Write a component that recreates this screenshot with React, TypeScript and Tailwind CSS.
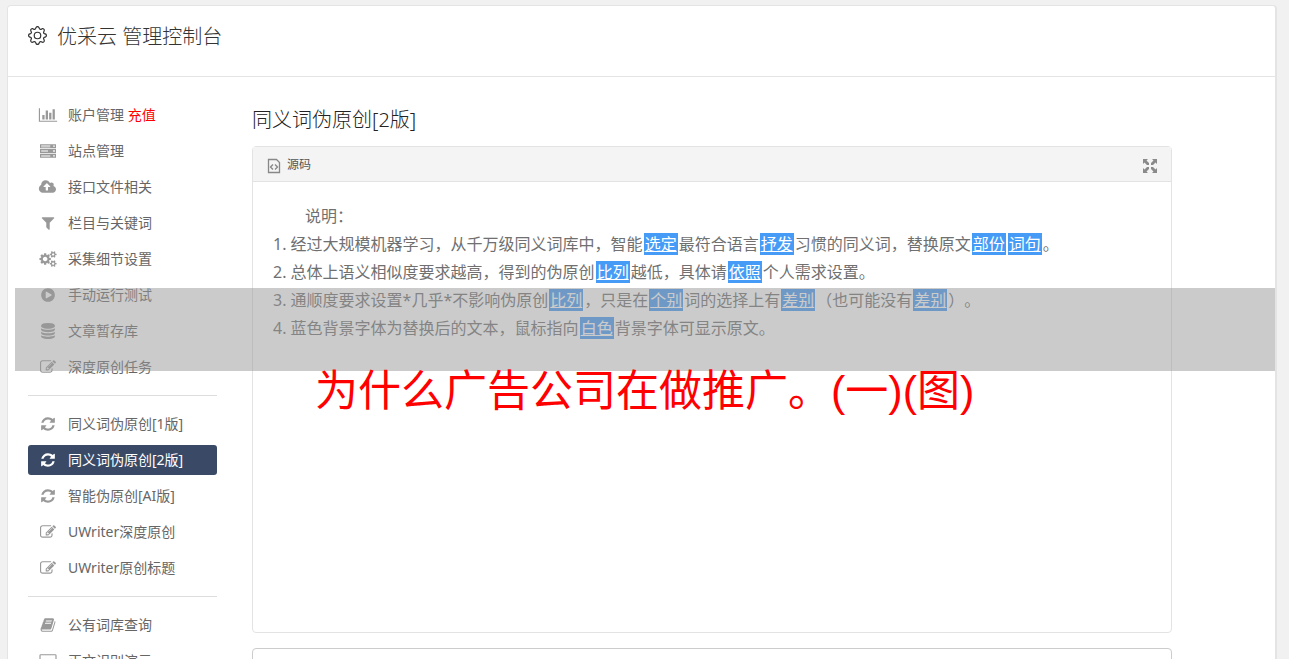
import React from 'react'
import { BsGear } from 'react-icons/bs'

type IconName = 'chart' | 'server' | 'cloud' | 'filter' | 'cogs' | 'play' | 'database' | 'edit' | 'refresh' | 'book' | 'desktop'

// [viewBox width, path]
const icons: Record<IconName, [number, string]> = {
    chart: [2048, 'M640 896v512h-256v-512h256zm384-512v1024h-256v-1024h256zm1024 1152v128h-2048v-1536h128v1408h1920zm-640-896v768h-256v-768h256zm384-384v1152h-256v-1152h256z'],
    server: [1792, 'M0 128h1792v448H0zM128 256v64h1024v-64zM128 400v64h1024v-64zM1472 272v160h192v-160zM0 672h1792v448H0zM128 800v64h768v-64zM128 944v64h768v-64zM1472 816v160h192v-160zM0 1216h1792v448H0zM128 1344v64h1024v-64zM128 1488v64h1024v-64zM1472 1360v160h192v-160z'],
    cloud: [1920, 'M1216 864q0-14-9-23l-352-352q-9-9-23-9t-23 9l-351 351q-10 12-10 24 0 14 9 23t23 9h224v352q0 13 9.5 22.5t22.5 9.5h192q13 0 22.5-9.5t9.5-22.5v-352h224q13 0 22.5-9.5t9.5-22.5zm640 288q0 159-112.5 271.5t-271.5 112.5h-1088q-185 0-316.5-131.5t-131.5-316.5q0-130 70-240t188-165q-2-30-2-43 0-212 150-362t362-150q156 0 285.5 87t188.5 231q71-62 166-62 106 0 181 75t75 181q0 76-41 138 130 31 213.5 135.5t83.5 238.5z'],
    filter: [1792, 'M1595 295q17 41-14 70l-493 493v742q0 42-39 59-13 5-25 5-27 0-45-19l-256-256q-19-19-19-45v-486l-493-493q-31-29-14-70 17-39 59-39h1280q42 0 59 39z'],
    cogs: [1920, 'M896 896q0-106-75-181t-181-75-181 75-75 181 75 181 181 75 181-75 75-181zm768 512q0-52-38-90t-90-38-90 38-38 90q0 53 37.5 90.5t90.5 37.5 90.5-37.5 37.5-90.5zm0-1024q0-52-38-90t-90-38-90 38-38 90q0 53 37.5 90.5t90.5 37.5 90.5-37.5 37.5-90.5zm-384 421v185q0 10-7 19.5t-16 10.5l-155 24q-11 35-32 76 34 48 90 115 7 11 7 20 0 12-7 19-23 30-82.5 89.5t-78.5 59.5q-11 0-21-7l-115-90q-37 19-77 31-11 108-23 155-7 24-30 24h-186q-11 0-20-7.5t-10-17.5l-23-153q-34-10-75-31l-118 89q-7 7-20 7-11 0-21-8-144-133-144-160 0-9 7-19 10-14 41-53t47-61q-23-44-35-82l-152-24q-10-1-17-9.5t-7-19.5v-185q0-10 7-19.5t16-10.5l155-24q11-35 32-76-34-48-90-115-7-11-7-20 0-12 7-20 22-30 82-89t79-59q11 0 21 7l115 90q34-18 77-32 11-108 23-154 7-24 30-24h186q11 0 20 7.5t10 17.5l23 153q34 10 75 31l118-89q8-7 20-7 11 0 21 8 144 133 144 160 0 8-7 19-12 16-42 54t-45 60q23 48 34 82l152 23q10 2 17 10.5t7 19.5zm640 533v140q0 16-149 31-12 27-30 52 51 113 51 138 0 4-4 7-122 71-124 71-8 0-46-47t-52-68q-20 2-30 2t-30-2q-14 21-52 68t-46 47q-2 0-124-71-4-3-4-7 0-25 51-138-18-25-30-52-149-15-149-31v-140q0-16 149-31 13-29 30-52-51-113-51-138 0-4 4-7 4-2 35-20t59-34 30-16q8 0 46 46.5t52 67.5q20-2 30-2t30 2q51-71 92-112l6-2q4 0 124 70 4 3 4 7 0 25-51 138 17 23 30 52 149 15 149 31zm0-1024v140q0 16-149 31-12 27-30 52 51 113 51 138 0 4-4 7-122 71-124 71-8 0-46-47t-52-68q-20 2-30 2t-30-2q-14 21-52 68t-46 47q-2 0-124-71-4-3-4-7 0-25 51-138-18-25-30-52-149-15-149-31v-140q0-16 149-31 13-29 30-52-51-113-51-138 0-4 4-7 4-2 35-20t59-34 30-16q8 0 46 46.5t52 67.5q20-2 30-2t30 2q51-71 92-112l6-2q4 0 124 70 4 3 4 7 0 25-51 138 17 23 30 52 149 15 149 31z'],
    play: [1792, 'M896 128q209 0 385.5 103t279.5 279.5 103 385.5-103 385.5-279.5 279.5-385.5 103-385.5-103-279.5-279.5-103-385.5 103-385.5 279.5-279.5 385.5-103zm384 823q32-18 32-55t-32-55l-544-320q-31-19-64-1-32 19-32 56v640q0 37 32 56 16 8 32 8 17 0 32-9z'],
    database: [1792, 'M896 768q237 0 443-43t325-127v170q0 69-103 128t-280 93.5-385 34.5-385-34.5-280-93.5-103-128v-170q119 84 325 127t443 43zm0 768q237 0 443-43t325-127v170q0 69-103 128t-280 93.5-385 34.5-385-34.5-280-93.5-103-128v-170q119 84 325 127t443 43zm0-384q237 0 443-43t325-127v170q0 69-103 128t-280 93.5-385 34.5-385-34.5-280-93.5-103-128v-170q119 84 325 127t443 43zm0-1152q208 0 385 34.5t280 93.5 103 128v128q0 69-103 128t-280 93.5-385 34.5-385-34.5-280-93.5-103-128v-128q0-69 103-128t280-93.5 385-34.5z'],
    edit: [1792, 'M888 1184l116-116-152-152-116 116v56h96v96h56zm440-720q-16-16-33 1l-350 350q-17 17-1 33t33-1l350-350q17-17 1-33zm80 594v190q0 119-84.5 203.5t-203.5 84.5h-832q-119 0-203.5-84.5t-84.5-203.5v-832q0-119 84.5-203.5t203.5-84.5h832q63 0 117 25 15 7 18 23 3 17-9 29l-49 49q-14 14-32 8-23-6-45-6h-832q-66 0-113 47t-47 113v832q0 66 47 113t113 47h832q66 0 113-47t47-113v-126q0-13 9-22l64-64q15-15 35-7t20 29zm-96-738l288 288-672 672h-288v-288zm444 132l-92 92-288-288 92-92q28-28 68-28t68 28l152 152q28 28 28 68t-28 68z'],
    refresh: [1792, 'M1639 1056q0 5-1 7-64 268-268 434.5t-478 166.5q-146 0-282.5-55t-243.5-157l-129 129q-19 19-45 19t-45-19-19-45v-448q0-26 19-45t45-19h448q26 0 45 19t19 45-19 45l-137 137q71 66 161 102t187 36q134 0 250-65t186-179q11-17 53-117 8-23 30-23h192q13 0 22.5 9.5t9.5 22.5zm25-800v448q0 26-19 45t-45 19h-448q-26 0-45-19t-19-45 19-45l138-138q-148-137-349-137-134 0-250 65t-186 179q-11 17-53 117-8 23-30 23h-199q-13 0-22.5-9.5t-9.5-22.5v-7q65-268 270-434.5t480-166.5q146 0 284 55.5t245 156.5l130-129q19-19 45-19t45 19 19 45z'],
    book: [1792, 'M1703 478q40 57 18 129l-275 906q-19 64-76.5 107.5t-122.5 43.5h-923q-77 0-148.5-53.5t-99.5-131.5q-24-67-2-127 0-4 3-27t4-37q1-8-3-21.5t-3-19.5q2-11 8-21t16.5-23.5 16.5-23.5q23-38 45-91.5t30-91.5q3-10 .5-30t-.5-28q3-11 17-28t17-23q21-36 42-92t25-90q1-9-2.5-32t.5-28q4-13 22-30.5t22-22.5q19-26 42.5-84.5t27.5-96.5q1-8-3-25.5t-2-26.5q2-8 9-18t18-23 17-21q8-12 16.5-30.5t15-35 16-36 19.5-32 26.5-23.5 36-11.5 47.5 5.5l-1 3q38-9 51-9h761q74 0 114 56t18 130l-274 906q-36 119-71.5 153.5t-128.5 34.5h-869q-27 0-38 15-11 16-1 43 24 70 144 70h923q29 0 56-15.5t35-41.5l300-987q7-22 5-57 38 15 59 43zm-1064 2q-4 13 2 22.5t20 9.5h608q13 0 25.5-9.5t16.5-22.5l21-64q4-13-2-22.5t-20-9.5h-608q-13 0-25.5 9.5t-16.5 22.5zm-83 256q-4 13 2 22.5t20 9.5h608q13 0 25.5-9.5t16.5-22.5l21-64q4-13-2-22.5t-20-9.5h-608q-13 0-25.5 9.5t-16.5 22.5z'],
    desktop: [1920, 'M160 128h1600q160 0 160 160v1088q0 160-160 160H1200v160h160v96H560v-96h160v-160H160Q0 1536 0 1376V288Q0 128 160 128zM128 256v896h1664V256z'],
}

const Icon = ({ name }: { name: IconName }) => {
    const [width, d] = icons[name]
    return (
        <svg viewBox={`0 0 ${width} 1792`} className='h-4 w-5 shrink-0' fill='currentColor' fillRule='evenodd' aria-hidden='true'>
            <path d={d} />
        </svg>
    )
}

interface MenuItem {
    icon: IconName
    label: string
    extra?: string
    active?: boolean
}

const menu: MenuItem[][] = [
    [
        { icon: 'chart', label: '账户管理', extra: '充值' },
        { icon: 'server', label: '站点管理' },
        { icon: 'cloud', label: '接口文件相关' },
        { icon: 'filter', label: '栏目与关键词' },
        { icon: 'cogs', label: '采集细节设置' },
        { icon: 'play', label: '手动运行测试' },
        { icon: 'database', label: '文章暂存库' },
        { icon: 'edit', label: '深度原创任务' },
    ],
    [
        { icon: 'refresh', label: '同义词伪原创[1版]' },
        { icon: 'refresh', label: '同义词伪原创[2版]', active: true },
        { icon: 'refresh', label: '智能伪原创[AI版]' },
        { icon: 'edit', label: 'UWriter深度原创' },
        { icon: 'edit', label: 'UWriter原创标题' },
    ],
    [
        { icon: 'book', label: '公有词库查询' },
        { icon: 'desktop', label: '正文识别演示' },
    ],
]

const Sidebar = () => (
    <nav className='w-[189px] shrink-0'>
        {menu.map((group, i) => (
            <ul key={i} className={i > 0 ? 'mt-[13px] flex flex-col gap-1.5 border-t border-[#ddd] pt-[13px]' : 'flex flex-col gap-1.5'}>
                {group.map((item) => (
                    <li key={item.label}>
                        <a
                            href='#'
                            className={item.active
                                ? 'flex h-[30px] items-center gap-2.5 rounded-[3px] bg-[#3a4a66] px-2.5 text-sm text-white'
                                : 'flex h-[30px] items-center gap-2.5 rounded-[3px] px-2.5 text-sm text-[#666]'}
                        >
                            <span className={item.active ? 'text-white' : 'text-[#999]'}>
                                <Icon name={item.icon} />
                            </span>
                            <span>
                                {item.label}
                                {item.extra && <span className='text-[#f00]'> {item.extra}</span>}
                            </span>
                        </a>
                    </li>
                ))}
            </ul>
        ))}
    </nav>
)

const Word = ({ children }: { children: React.ReactNode }) => (
    <span className='mx-px bg-[#459bf5] px-px text-white underline'>{children}</span>
)

const Editor = () => (
    <section className='rounded border border-[#e3e3e3]'>
        <div className='flex h-[35px] items-center justify-between border-b border-[#e3e3e3] bg-[#f4f4f4] px-3.5'>
            <button type='button' className='flex items-center gap-1.5 pt-0.5 text-xs text-[#555]'>
                <svg viewBox='0 0 14 16' className='mt-0.5 h-4 w-3.5' fill='none' stroke='#888' aria-hidden='true'>
                    <path d='M1.500 1.500h8l3 3v10h-11z' strokeWidth='1.300' />
                    <path d='M6 6.500l-2.500 2.500 2.500 2.500M8 6.500l2.500 2.500-2.500 2.500' strokeWidth='1.400' />
                </svg>
                源码
            </button>
            <button type='button' aria-label='最大化'>
                <svg viewBox='0 0 14 14' className='mt-1 h-3.5 w-3.5' fill='#8a8a8a' aria-hidden='true'>
                    <path d='M0 0h5L3.500 1.500 6 4v2H4L1.500 3.500 0 5zM14 0v5l-1.500-1.500L10 6H8V4l2.500-2.500L9 0zM0 14V9l1.500 1.500L4 8h2v2l-2.500 2.500L5 14zM14 14H9l1.500-1.500L8 10V8h2l2.500 2.500L14 9z' />
                </svg>
            </button>
        </div>
        <div className='min-h-[450px] p-5 text-base leading-7 text-[#707070] [text-spacing-trim:space-all]'>
            <p className='indent-8'>说明：</p>
            <ol className='list-inside list-decimal'>
                <li>经过大规模机器学习，从千万级同义词库中，智能<Word>选定</Word>最符合语言<Word>抒发</Word>习惯的同义词，替换原文<Word>部份</Word><Word>词句</Word>。</li>
                <li>总体上语义相似度要求越高，得到的伪原创<Word>比列</Word>越低，具体请<Word>依照</Word>个人需求设置。</li>
                <li>通顺度要求设置*几乎*不影响伪原创<Word>比列</Word>，只是在<Word>个别</Word>词的选择上有<Word>差别</Word>（也可能没有<Word>差别</Word>）。</li>
                <li>蓝色背景字体为替换后的文本，鼠标指向<Word>白色</Word>背景字体可显示原文。</li>
            </ol>
        </div>
    </section>
)

const App = () => {
    return (
        <div className="relative h-screen overflow-hidden bg-[#f1f1f1] pt-[5px] pr-3 pl-[7px] font-['Noto_Sans','Noto_Sans_CJK_SC',sans-serif]">
            <div className='rounded-t border border-r-2 border-[#e4e4e4] bg-white'>
                <header className='flex h-[71px] items-start gap-2.5 border-b border-[#e4e4e4] px-5 pt-[17px] text-[#333]'>
                    <BsGear className='mt-[3px] h-[19px] w-[19px]' />
                    <h1 className='text-xl leading-7 font-light'>优采云 管理控制台</h1>
                </header>

                <div className='flex gap-[35px] px-5 pt-[23px]'>
                    <Sidebar />
                    <main className='max-w-[920px] flex-1 pt-1.5'>
                        <h2 className='mb-3 text-xl leading-7 font-light text-[#222]'>同义词伪原创[2版]</h2>
                        <Editor />
                        <div className='mt-[15px] h-24 rounded border border-[#ccc]'></div>
                    </main>
                </div>
            </div>

            {/* caption over the page */}
            <div className='absolute top-[288px] right-3.5 left-[15px]'>
                <div className='h-[83px] bg-[#979797]/50'></div>
                <p className="-mt-2.5 pl-[300px] font-['Liberation_Sans','Noto_Sans_CJK_SC',sans-serif] text-[43px] leading-[60px] text-[#f00]">为什么广告公司在做推广。(一)(图)</p>
            </div>
        </div>
    )
}

export default App
